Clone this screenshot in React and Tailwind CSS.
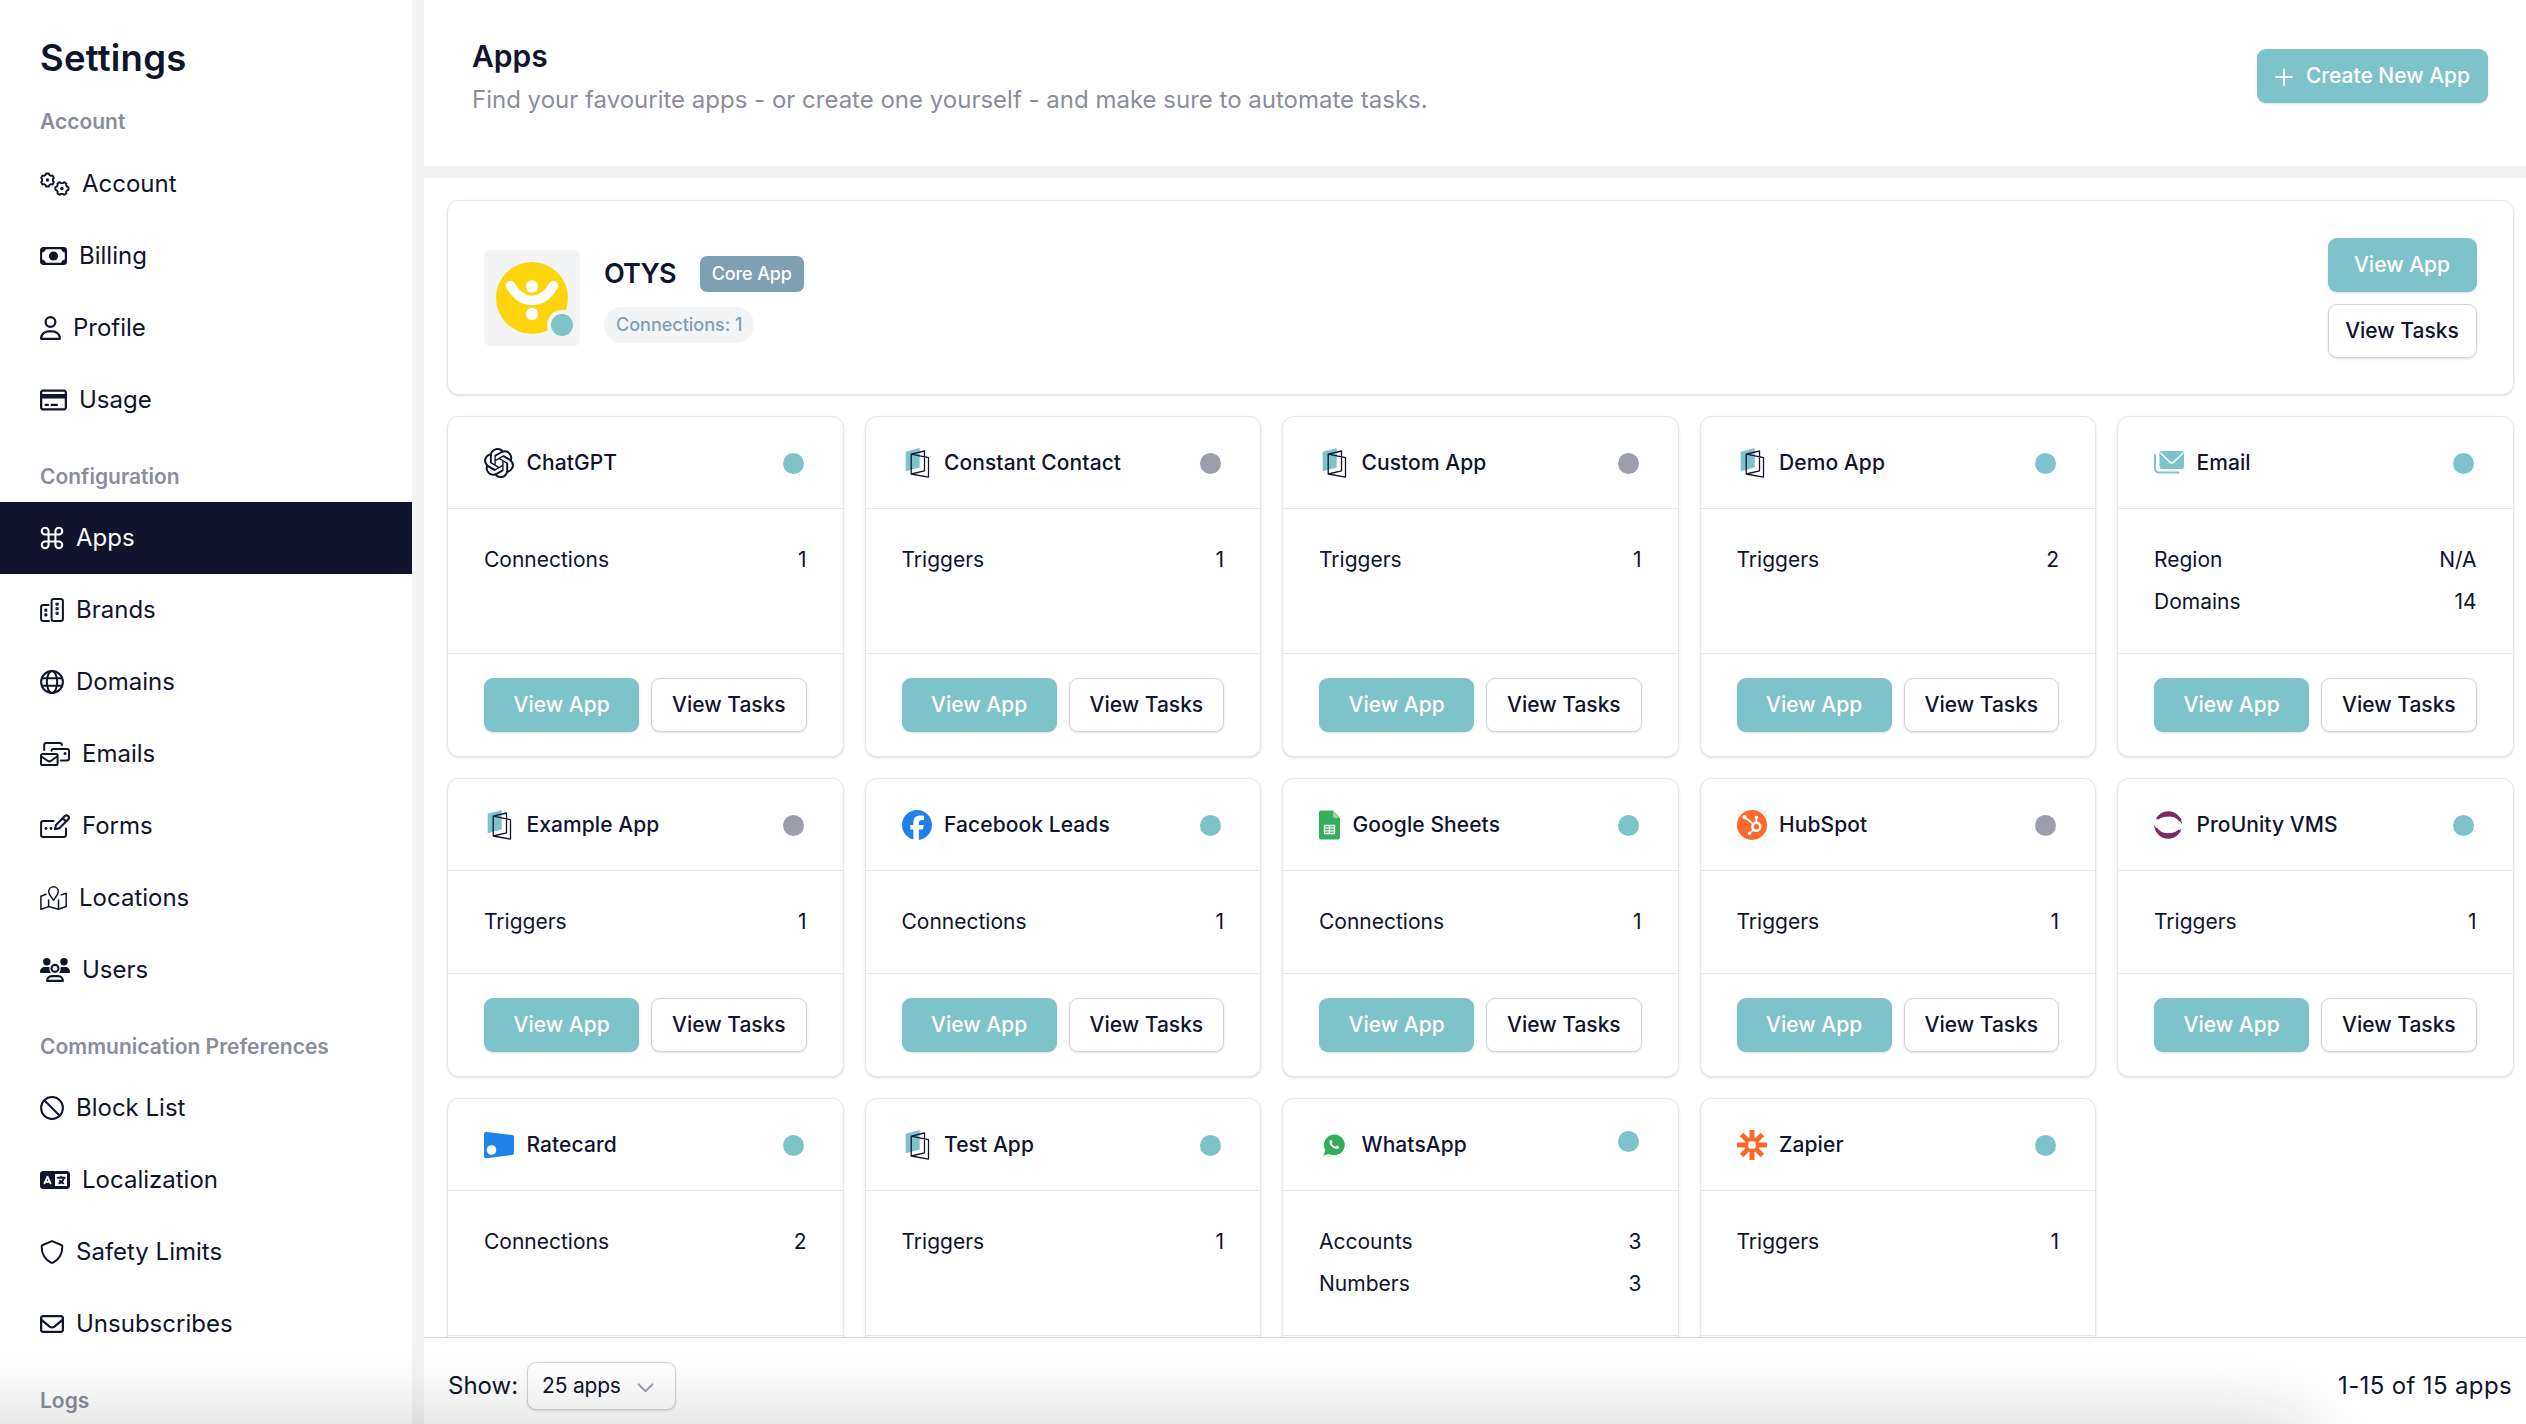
import React from "react";
import { SiOpenai, SiHubspot } from "react-icons/si";
import { FaLanguage, FaRegEnvelope, FaRegCreditCard, FaRegUser, FaFacebook } from "react-icons/fa6";

/* ---------- sidebar icons ---------- */

function Line({ w, sw = 2, children }) {
  return (
    <svg
      width={w}
      height="24"
      viewBox={`0 0 ${w} 24`}
      fill="none"
      stroke="currentColor"
      strokeWidth={sw}
      strokeLinecap="round"
      strokeLinejoin="round"
      className="shrink-0"
    >
      {children}
    </svg>
  );
}

function gearPath(cx, cy, phase) {
  const pts = [];
  for (let i = 0; i < 6; i++) {
    const a = ((i * 60 + phase) * Math.PI) / 180;
    const at = (off, r) => `${(cx + r * Math.cos(a + off)).toFixed(2)} ${(cy + r * Math.sin(a + off)).toFixed(2)}`;
    pts.push(at(-0.2, 6.7), at(0.2, 6.7), at(0.36, 5.4), at(0.69, 5.4));
  }
  return "M" + pts.join("L") + "Z";
}

const GearsIcon = () => (
  <Line w={30} sw={1.9}>
    <path d={gearPath(7.5, 8, 30)} />
    <path d={gearPath(21.9, 16.5, 0)} />
    <circle cx="7.5" cy="8" r="1.7" fill="currentColor" stroke="none" />
    <circle cx="21.9" cy="16.5" r="1.7" fill="currentColor" stroke="none" />
  </Line>
);

const MoneyIcon = () => (
  <Line w={27} sw={2.2}>
    <rect x="1.1" y="4.1" width="24.8" height="15.8" rx="2.2" />
    <path
      d="M1 4h5a4.5 4.5 0 0 1-4.500 4.500H1zM26 4h-5a4.500 4.500 0 0 0 4.500 4.500H26zM1 20h5a4.500 4.500 0 0 0-4.500-4.500H1zM26 20h-5a4.500 4.500 0 0 1 4.500-4.500H26z"
      fill="currentColor"
      stroke="none"
    />
    <circle cx="13.5" cy="12" r="4.6" fill="currentColor" stroke="none" />
  </Line>
);

const CommandIcon = () => (
  <svg width="24" height="24" viewBox="2 2 20 20" fill="none" stroke="currentColor" strokeWidth="1.8" className="shrink-0 overflow-visible">
    <path d="M15 6v12a3 3 0 1 0 3-3H6a3 3 0 1 0 3 3V6a3 3 0 1 0-3 3h12a3 3 0 1 0-3-3" transform="translate(12 12) scale(.95) translate(-12 -12)" />
  </svg>
);

const BrandsIcon = () => (
  <Line w={24}>
    <rect x="11.6" y="1.100" width="11.300" height="21.800" rx="2.200" />
    <path d="M8.500 7H3.300A2.200 2.200 0 0 0 1.100 9.200v11.500a2.200 2.200 0 0 0 2.200 2.200h5.700" />
    <path d="M16.200 5h2v2.300h-2zM16.200 9.600h2v2.300h-2zM16.200 14.200h2v2.300h-2zM5 11h2v2.300H5zM5 15.800h2v2.300H5z" fill="currentColor" strokeWidth=".7" />
  </Line>
);

const GlobeIcon = () => (
  <Line w={24}>
    <circle cx="12" cy="12" r="10.900" />
    <ellipse cx="12" cy="12" rx="5.200" ry="10.900" />
    <path d="M1.800 8.300h20.400M1.800 15.700h20.400" strokeLinecap="butt" />
  </Line>
);

const EmailsIcon = () => (
  <Line w={30}>
    <path d="M4.200 8V3a2 2 0 0 1 2-2h13.600a2 2 0 0 1 2 2" />
    <path d="M11.500 8.800A1.800 1.800 0 0 1 13.300 7h13.700a2 2 0 0 1 2 2v7.500a2 2 0 0 1-2 2h-6.200" />
    <circle cx="25" cy="11.400" r="1.500" fill="currentColor" stroke="none" />
    <rect x="1" y="12" width="16.600" height="11" rx="1.600" />
    <path d="m1.500 14.500 6 4.200a3 3 0 0 0 3.600 0l6-4.200" />
  </Line>
);

const FormsIcon = () => (
  <Line w={30}>
    <path d="M13.500 7H3.300a2.200 2.200 0 0 0-2.200 2.200v11.500a2.200 2.200 0 0 0 2.200 2.200h20.500a2.200 2.200 0 0 0 2.200-2.200V14.500" />
    <path d="M15 15.200l1-4.300 8.800-8.800a2.300 2.300 0 0 1 3.300 3.300L19.300 14.200zM22.800 4.200l3.200 3.200" strokeWidth="2.100" />
    <circle cx="6" cy="14.500" r="1.400" fill="currentColor" stroke="none" />
    <circle cx="11" cy="14.500" r="1.400" fill="currentColor" stroke="none" />
  </Line>
);

const MapIcon = () => (
  <Line w={27} sw={1.5}>
    <path d="M6 8.200.9 10.300v13L8.600 20.600 18.500 23.200l7.700-2.700V7.300L21.200 8.900M8.600 14v6.600M18.500 14v9.200" />
    <path d="M13.500 14.200C11.500 11.600 8.700 8.300 8.700 5.600a4.800 4.800 0 0 1 9.600 0c0 2.700-2.800 6-4.800 8.600z" />
  </Line>
);

const UsersIcon = () => (
  <Line w={30} sw={2.100}>
    <g fill="currentColor" stroke="none">
      <circle cx="6.800" cy="3.700" r="3.700" />
      <circle cx="24" cy="3.700" r="3.700" />
      <path d="M0 14c0-3 2-5 4.800-5h3.400c.5 0 .9.100 1.300.2a6.500 6.500 0 0 0 1.300 5.800H1a1 1 0 0 1-1-1zM30 14c0-3-2-5-4.800-5h-3.400c-.5 0-.9.100-1.300.2a6.500 6.500 0 0 1-1.300 5.800H29a1 1 0 0 0 1-1z" />
    </g>
    <circle cx="15" cy="10.400" r="3.500" />
    <path d="M7.100 22.900c0-2.900 2-4.800 4.600-4.800h6.600c2.600 0 4.600 1.900 4.600 4.800z" />
  </Line>
);

const BlockIcon = () => (
  <Line w={24}>
    <circle cx="12" cy="12" r="10.900" />
    <path d="m4.500 4.500 15 15" />
  </Line>
);

const ShieldIcon = () => (
  <Line w={24}>
    <path d="M12 1.100 21.300 5a1.700 1.700 0 0 1 1.100 1.600c-.1 5.500-2.300 12.500-9.400 16a2.200 2.200 0 0 1-2 0C3.900 19.100 1.700 12.100 1.600 6.600A1.700 1.700 0 0 1 2.700 5z" />
  </Line>
);

const Fa = ({ icon: Icon, w }) => (
  <Icon className="h-6 shrink-0" style={{ width: w }} />
);

/* ---------- app logos ---------- */

const DoorLogo = () => (
  <svg width="30" height="30" viewBox="0 0 30 30" className="shrink-0">
    <path d="M3.700 3.700 17.700 0v19.600L3.700 23.300z" fill="#7fc3ca" />
    <path d="M9.200 6.200 22.500 3v19.800L9.200 26zM9.200 6.200l17.300 3.500v19.400L9.200 26z" fill="none" stroke="#10142d" strokeWidth="1.300" strokeLinejoin="round" />
  </svg>
);

const EmailLogo = () => (
  <svg width="30" height="30" viewBox="0 0 30 30" className="shrink-0">
    <rect x="5.500" y="3" width="24.500" height="18" rx="2.800" fill="#7fc3ca" />
    <path d="m6.500 5 9.200 9a3 3 0 0 0 4.200 0l9.200-9" fill="none" stroke="#fff" strokeWidth="1.500" />
    <path d="M1 7v13.500A4 4 0 0 0 5 24.600h19.500" fill="none" stroke="#7fc3ca" strokeWidth="2" strokeLinecap="round" />
  </svg>
);

const SheetsLogo = () => (
  <svg width="21" height="30" viewBox="0 0 21 30" className="shrink-0">
    <path d="M2 .5h12L21 8v19.500a2 2 0 0 1-2 2H2a2 2 0 0 1-2-2v-25a2 2 0 0 1 2-2z" fill="#36ad5c" />
    <path d="M14 .5 21 8h-5a2 2 0 0 1-2-2z" fill="#8fd0a6" />
    <path d="M5.500 15.500h10v8h-10zM5.500 18.200h10M5.500 20.900h10M10.500 15.500v8" fill="none" stroke="#fff" strokeWidth="1.300" />
  </svg>
);

const HubspotLogo = () => (
  <span className="flex size-[30px] shrink-0 items-center justify-center bg-[#f5f5f7]">
    <span className="flex size-[30px] items-center justify-center rounded-full bg-[#fb6a2c] text-white">
      <SiHubspot size={20} />
    </span>
  </span>
);

const ProUnityLogo = () => (
  <svg width="30" height="30" viewBox="0 0 30 30" className="shrink-0">
    <path d="M2 10C4 4.500 8.500 1.300 14.500 1.300c7.300 0 13 5.500 13.700 13.200C25.500 9.500 21 6.400 15.500 6.400c-5.500 0-9.800 1.300-13.500 3.600z" fill="#7c2a68" />
    <path d="M0 14.500C2.500 20.200 7.500 23.200 13.500 23.200c5.500 0 9.800-1.700 13.700-4.200C25 25 20.500 28.800 14.500 28.800 6.500 28.800.6 22.500 0 14.500z" fill="#7c2a68" />
    <path d="M3.500 8.500C6 5.800 10 4.600 14.500 4.600s9 2 12 6M2 18.500c2.500 4.500 7 6.700 12.500 6.700 4.500 0 8.500-1.700 11.200-4.700" fill="none" stroke="#7c2a68" strokeWidth="3" />
  </svg>
);

const RatecardLogo = () => (
  <svg width="30" height="30" viewBox="0 0 30 30" className="shrink-0">
    <path d="M2.500 2 28 5a2 2 0 0 1 2 2v16a2 2 0 0 1-2 2L2.500 28.300A2.300 2.300 0 0 1 0 26V4a2.200 2.200 0 0 1 2.500-2z" fill="#1f84ea" />
    <circle cx="7.500" cy="20" r="4.800" fill="#fff" />
  </svg>
);

const WhatsappLogo = () => (
  <svg width="30" height="30" viewBox="0 0 30 30" className="shrink-0">
    <path d="M3.500 27.500l1.800-6.200A11.800 11.800 0 1 1 10 25.800z" fill="#fff" stroke="#ececec" strokeWidth="1" />
    <path d="M4.800 25.400l1.500-5.300A10.400 10.400 0 1 1 10.200 24z" fill="#35ac5b" />
    <path
      transform="translate(5.600 4.900) scale(.8)"
      d="M17.472 14.382c-.297-.149-1.758-.867-2.030-.967-.273-.099-.471-.148-.67.15-.197.297-.767.966-.94 1.164-.173.199-.347.223-.644.075-.297-.15-1.255-.463-2.390-1.475-.883-.788-1.480-1.761-1.653-2.059-.173-.297-.018-.458.13-.606.134-.133.298-.347.446-.52.149-.174.198-.298.298-.497.099-.198.050-.371-.025-.52-.075-.149-.669-1.612-.916-2.207-.242-.579-.487-.5-.669-.51-.173-.008-.371-.01-.57-.01-.198 0-.52.074-.792.372-.272.297-1.040 1.016-1.040 2.479 0 1.462 1.065 2.875 1.213 3.074.149.198 2.096 3.200 5.077 4.487.709.306 1.262.489 1.694.625.712.227 1.360.195 1.871.118.571-.085 1.758-.719 2.006-1.413.248-.694.248-1.289.173-1.413-.074-.124-.272-.198-.57-.347"
      fill="#fff"
    />
  </svg>
);

const ZapierLogo = () => (
  <svg width="30" height="30" viewBox="0 0 30 30" className="shrink-0">
    <path d="M15 0v30M0 15h30M4.600 4.600l20.800 20.800M25.400 4.600 4.600 25.400" stroke="#fb6a2c" strokeWidth="5" />
    <circle cx="15" cy="15" r="7.500" fill="#fb6a2c" />
    <rect x="11.300" y="11.300" width="7.400" height="7.400" rx="2.600" fill="#fff" />
  </svg>
);

const OtysLogo = () => (
  <svg width="72" height="72" viewBox="0 0 72 72">
    <circle cx="36" cy="36" r="36" fill="#fed40c" />
    <path d="M14.500 23.500C20 33 27 38.500 36 38.500S52 33 57.500 23.500" fill="none" stroke="#fff" strokeWidth="9.500" strokeLinecap="round" />
    <circle cx="36" cy="24.500" r="6.200" fill="#fff" />
    <circle cx="36" cy="52" r="6.200" fill="#fff" />
  </svg>
);

/* ---------- data ---------- */

const sections = [
  {
    title: "Account",
    items: [
      ["Account", <GearsIcon />],
      ["Billing", <MoneyIcon />],
      ["Profile", <Fa icon={FaRegUser} w={21} />],
      ["Usage", <Fa icon={FaRegCreditCard} w={27} />],
    ],
  },
  {
    title: "Configuration",
    items: [
      ["Apps", <CommandIcon />],
      ["Brands", <BrandsIcon />],
      ["Domains", <GlobeIcon />],
      ["Emails", <EmailsIcon />],
      ["Forms", <FormsIcon />],
      ["Locations", <MapIcon />],
      ["Users", <UsersIcon />],
    ],
  },
  {
    title: "Communication Preferences",
    items: [
      ["Block List", <BlockIcon />],
      ["Localization", <Fa icon={FaLanguage} w={30} />],
      ["Safety Limits", <ShieldIcon />],
      ["Unsubscribes", <Fa icon={FaRegEnvelope} w={24} />],
    ],
  },
  { title: "Logs", items: [] },
];

const apps = [
  { name: "ChatGPT", logo: <SiOpenai size={30} className="shrink-0" />, on: true, rows: [["Connections", "1"]] },
  { name: "Constant Contact", logo: <DoorLogo />, on: false, rows: [["Triggers", "1"]] },
  { name: "Custom App", logo: <DoorLogo />, on: false, rows: [["Triggers", "1"]] },
  { name: "Demo App", logo: <DoorLogo />, on: true, rows: [["Triggers", "2"]] },
  { name: "Email", logo: <EmailLogo />, on: true, rows: [["Region", "N/A"], ["Domains", "14"]] },
  { name: "Example App", logo: <DoorLogo />, on: false, rows: [["Triggers", "1"]] },
  { name: "Facebook Leads", logo: <FaFacebook size={30} className="shrink-0 text-[#1f80ea]" />, on: true, rows: [["Connections", "1"]] },
  { name: "Google Sheets", logo: <SheetsLogo />, on: true, rows: [["Connections", "1"]] },
  { name: "HubSpot", logo: <HubspotLogo />, on: false, rows: [["Triggers", "1"]] },
  { name: "ProUnity VMS", logo: <ProUnityLogo />, on: true, rows: [["Triggers", "1"]] },
  { name: "Ratecard", logo: <RatecardLogo />, on: true, rows: [["Connections", "2"]] },
  { name: "Test App", logo: <DoorLogo />, on: true, rows: [["Triggers", "1"]] },
  { name: "WhatsApp", logo: <WhatsappLogo />, on: true, raised: true, rows: [["Accounts", "3"], ["Numbers", "3"]] },
  { name: "Zapier", logo: <ZapierLogo />, on: true, rows: [["Triggers", "1"]] },
];

// Cards past this index have their action row scrolled out of view.
const VISIBLE_ACTIONS = 10;

/* ---------- pieces ---------- */

function Button({ primary, className = "", children }) {
  const look = primary
    ? "bg-[#7fc3ca] text-white"
    : "border border-[#d1d5db] bg-white text-[#10142d]";
  return (
    <button className={`flex h-[54px] items-center justify-center rounded-[9px] text-[21px] font-medium whitespace-nowrap shadow-sm ${look} ${className}`}>
      {children}
    </button>
  );
}

function Sidebar() {
  return (
    <aside className="h-full w-[412px] shrink-0 overflow-hidden bg-white pt-9">
      <h1 className="px-10 text-[36.500px] leading-[45.500px] font-semibold tracking-[0.006em]">Settings</h1>
      {sections.map((s) => (
        <section key={s.title}>
          <h2 className="flex h-[66.200px] items-center px-10 pt-[15px] text-[21px] font-semibold text-[#8b8d9b]">
            {s.title}
          </h2>
          {s.items.map(([label, icon]) => (
            <a
              key={label}
              className={`flex h-[72px] items-center gap-3 px-10 text-2xl ${label === "Apps" ? "bg-[#10142d] text-white" : ""}`}
            >
              {icon}
              {label}
            </a>
          ))}
        </section>
      ))}
    </aside>
  );
}

function AppCard({ app, actions }) {
  return (
    <article className="flex flex-col rounded-[12px] border border-[#e5e7eb] bg-white shadow-sm">
      <header className="flex h-[92px] items-center border-b border-[#e5e7eb] px-9">
        {app.logo}
        <h3 className="ml-[12.500px] text-[21px] font-medium tracking-[0.004em]">{app.name}</h3>
        <span
          className={`mr-[3px] ml-auto size-[21px] rounded-full ${app.on ? "bg-[#7fc3ca]" : "bg-[#9c9eab]"} ${app.raised ? "mb-[6px]" : "mt-[2px]"}`}
        />
      </header>
      <dl className="flex grow flex-col gap-3 p-9 text-[21px] leading-[30px]">
        {app.rows.map(([k, v]) => (
          <div key={k} className="flex justify-between">
            <dt>{k}</dt>
            <dd>{v}</dd>
          </div>
        ))}
      </dl>
      <footer className="grid h-[103px] grid-cols-2 gap-3 border-t border-[#e5e7eb] px-9 py-6">
        {actions && (
          <>
            <Button primary>View App</Button>
            <Button>View Tasks</Button>
          </>
        )}
      </footer>
    </article>
  );
}

export default function App() {
  return (
    <div className="relative flex h-[1424px] w-[2526px] gap-3 overflow-hidden bg-[#f3f4f6] font-[Inter,sans-serif] text-[#10142d]">
      <Sidebar />

      <div className="flex min-w-0 grow flex-col">
        <header className="mb-3 flex h-[166px] shrink-0 justify-between bg-white pr-[38px] pl-12">
          <div className="pt-[35px]">
            <h2 className="text-[30px] leading-[42px] font-semibold">Apps</h2>
            <p className="mt-[5px] text-2xl leading-9 text-[#8b8d9b]">
              Find your favourite apps - or create one yourself - and make sure to automate tasks.
            </p>
          </div>
          <Button primary className="mt-[49px] w-[231px] gap-[13px]">
            <svg width="18" height="18" viewBox="0 0 17 17" fill="none" stroke="currentColor" strokeWidth="1.700" strokeLinecap="round" className="mt-[2px]">
              <path d="M8.500 1v15M1 8.500h15" />
            </svg>
            Create New App
          </Button>
        </header>

        <main className="flex min-h-0 grow flex-col gap-[21px] overflow-hidden bg-white pt-[22px] pr-[12.500px] pl-[23px]">
          <section className="flex h-[195px] shrink-0 items-center rounded-[12px] border border-[#e5e7eb] bg-white px-9 pt-[1px] shadow-sm">
            <div className="relative flex size-24 items-center justify-center rounded-[6px] bg-[#f3f4f6]">
              <OtysLogo />
              <span className="absolute right-[3px] bottom-[6px] size-[30px] rounded-full border-[4.500px] border-[#f3f4f6] bg-[#7fc3ca]" />
            </div>
            <div className="ml-6 flex flex-col items-start gap-[15px] pt-[2px]">
              <div className="flex h-9 items-center gap-6">
                <h3 className="pt-[2px] text-[27px] font-semibold tracking-[-0.03em]">OTYS</h3>
                <span className="flex h-9 items-center rounded-[7px] bg-[#7f9fb3] px-3 text-lg font-medium tracking-[-0.006em] text-white">Core App</span>
              </div>
              <span className="flex h-9 items-center rounded-full bg-[#f3f4f6] px-3 text-lg font-medium text-[#7f9fb3]">Connections: 1</span>
            </div>
            <div className="ml-auto flex w-[149px] flex-col gap-3">
              <Button primary>View App</Button>
              <Button>View Tasks</Button>
            </div>
          </section>

          <div className="grid shrink-0 grid-cols-5 gap-[21px]">
            {apps.map((app, i) => (
              <AppCard key={app.name} app={app} actions={i < VISIBLE_ACTIONS} />
            ))}
          </div>
        </main>

        <footer className="z-10 flex h-[87px] shrink-0 items-start justify-between border-t border-[#d1d5db] bg-white pt-6 pr-[14px] pl-6 text-2xl">
          <div className="flex h-12 items-center gap-[9px]">
            Show:
            <span className="flex h-12 w-[149px] items-center justify-between rounded-[9px] border border-[#d1d5db] bg-white pr-[21px] pl-[14px] text-[21px] tracking-[-0.01em] shadow-sm">
              25 apps
              <svg width="17" height="10" viewBox="0 0 17 10" fill="none" stroke="#9ca3af" strokeWidth="2" strokeLinecap="round" strokeLinejoin="round" className="mt-[3px]">
                <path d="m1.500 1.200 7 7 7-7" />
              </svg>
            </span>
          </div>
          <span className="flex h-12 items-center tracking-[0.015em]">1-15 of 15 apps</span>
        </footer>
      </div>

      {/* soft shade rising from the bottom edge of the window */}
      <div className="pointer-events-none absolute -bottom-[200px] -left-[200px] z-20 h-[200px] w-[2510px] rounded-[30px] shadow-[0_0_80px_rgba(16,20,32,0.2)]" />
    </div>
  );
}
